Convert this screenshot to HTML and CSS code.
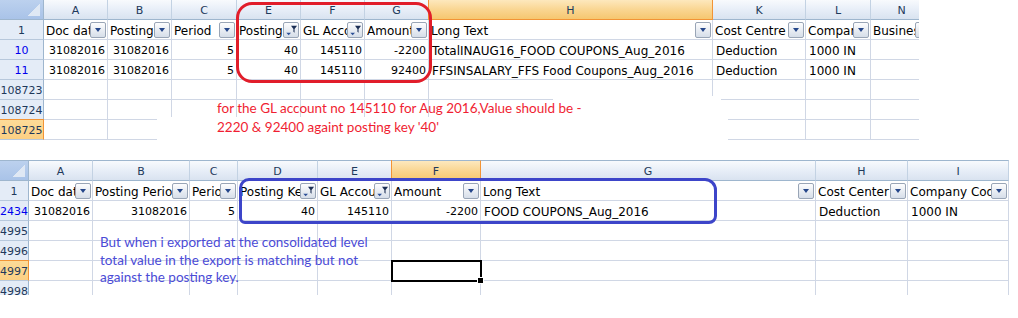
FILE: index.html
```html
<!doctype html>
<html lang="en">
<head>
    <meta charset="UTF-8">
    <title>GL export check</title>
    <link rel="stylesheet" href="styles.css">
</head>
<body>
<div class="sheet sheet--top">
    <div class="grid">
        <div class="corner"></div>
        <div class="ch">A</div>
        <div class="ch">B</div>
        <div class="ch">C</div>
        <div class="ch">E</div>
        <div class="ch">F</div>
        <div class="ch">G</div>
        <div class="ch ch--sel">H</div>
        <div class="ch">K</div>
        <div class="ch">L</div>
        <div class="ch">N</div>

        <div class="rh">1</div>
        <div class="c hd"><span>Doc date</span><i class="dd"></i></div>
        <div class="c hd"><span>Posting Date</span><i class="dd"></i></div>
        <div class="c hd"><span>Period</span><i class="dd"></i></div>
        <div class="c hd"><span>Posting Key</span><i class="dd dd--on"><svg viewBox="0 0 15 15"><path class="fn" d="M7.5 3H14L11.3 6.3V10.5L10.1 9.5V6.3Z"/><path class="ar" d="M2.5 10.5H7.5L5 13Z"/></svg></i></div>
        <div class="c hd"><span>GL Account</span><i class="dd dd--on"><svg viewBox="0 0 15 15"><path class="fn" d="M7.5 3H14L11.3 6.3V10.5L10.1 9.5V6.3Z"/><path class="ar" d="M2.5 10.5H7.5L5 13Z"/></svg></i></div>
        <div class="c hd"><span>Amount</span><i class="dd"></i></div>
        <div class="c hd"><span>Long Text</span><i class="dd"></i></div>
        <div class="c hd"><span>Cost Centre</span><i class="dd"></i></div>
        <div class="c hd"><span>Company Code</span><i class="dd"></i></div>
        <div class="c hd"><span>Business Area</span><i class="dd"></i></div>

        <div class="rh rh--hit">10</div>
        <div class="c n">31082016</div>
        <div class="c n">31082016</div>
        <div class="c n">5</div>
        <div class="c n">40</div>
        <div class="c n">145110</div>
        <div class="c n">-2200</div>
        <div class="c">TotalINAUG16_FOOD COUPONS_Aug_2016</div>
        <div class="c">Deduction</div>
        <div class="c">1000 IN</div>
        <div class="c"></div>

        <div class="rh rh--hit">11</div>
        <div class="c n">31082016</div>
        <div class="c n">31082016</div>
        <div class="c n">5</div>
        <div class="c n">40</div>
        <div class="c n">145110</div>
        <div class="c n">92400</div>
        <div class="c">FFSINSALARY_FFS Food Coupons_Aug_2016</div>
        <div class="c">Deduction</div>
        <div class="c">1000 IN</div>
        <div class="c"></div>

        <div class="rh">108723</div>
        <div class="c"></div><div class="c"></div><div class="c"></div><div class="c"></div><div class="c"></div>
        <div class="c"></div><div class="c"></div><div class="c"></div><div class="c"></div><div class="c"></div>

        <div class="rh">108724</div>
        <div class="c"></div><div class="c"></div><div class="c"></div><div class="c"></div><div class="c"></div>
        <div class="c"></div><div class="c"></div><div class="c"></div><div class="c"></div><div class="c"></div>

        <div class="rh rh--sel">108725</div>
        <div class="c"></div><div class="c"></div><div class="c"></div><div class="c"></div><div class="c"></div>
        <div class="c"></div><div class="c"></div><div class="c"></div><div class="c"></div><div class="c"></div>
    </div>
    <div class="patch patch--low"></div>
    <div class="patch patch--high"></div>
    <div class="ring ring--red"></div>
    <p class="note note--red">for the GL account no 145110 for Aug 2016,Value should be -<br>2220 &amp; 92400 againt posting key '40'</p>
</div>

<div class="sheet sheet--bottom">
    <div class="grid">
        <div class="corner"></div>
        <div class="ch">A</div>
        <div class="ch">B</div>
        <div class="ch">C</div>
        <div class="ch">D</div>
        <div class="ch">E</div>
        <div class="ch ch--sel">F</div>
        <div class="ch">G</div>
        <div class="ch">H</div>
        <div class="ch">I</div>

        <div class="rh">1</div>
        <div class="c hd"><span>Doc date</span><i class="dd"></i></div>
        <div class="c hd"><span>Posting Period</span><i class="dd"></i></div>
        <div class="c hd"><span>Period</span><i class="dd"></i></div>
        <div class="c hd"><span>Posting Key</span><i class="dd dd--on"><svg viewBox="0 0 15 15"><path class="fn" d="M7.5 3H14L11.3 6.3V10.5L10.1 9.5V6.3Z"/><path class="ar" d="M2.5 10.5H7.5L5 13Z"/></svg></i></div>
        <div class="c hd"><span>GL Account</span><i class="dd dd--on"><svg viewBox="0 0 15 15"><path class="fn" d="M7.5 3H14L11.3 6.3V10.5L10.1 9.5V6.3Z"/><path class="ar" d="M2.5 10.5H7.5L5 13Z"/></svg></i></div>
        <div class="c hd"><span>Amount</span><i class="dd"></i></div>
        <div class="c hd"><span>Long Text</span><i class="dd"></i></div>
        <div class="c hd"><span>Cost Center</span><i class="dd"></i></div>
        <div class="c hd"><span>Company Code</span><i class="dd"></i></div>

        <div class="rh rh--hit">2434</div>
        <div class="c n">31082016</div>
        <div class="c n">31082016</div>
        <div class="c n">5</div>
        <div class="c n">40</div>
        <div class="c n">145110</div>
        <div class="c n">-2200</div>
        <div class="c">FOOD COUPONS_Aug_2016</div>
        <div class="c">Deduction</div>
        <div class="c">1000 IN</div>

        <div class="rh">4995</div>
        <div class="c"></div><div class="c"></div><div class="c"></div><div class="c"></div><div class="c"></div>
        <div class="c"></div><div class="c"></div><div class="c"></div><div class="c"></div>

        <div class="rh">4996</div>
        <div class="c"></div><div class="c"></div><div class="c"></div><div class="c"></div><div class="c"></div>
        <div class="c"></div><div class="c"></div><div class="c"></div><div class="c"></div>

        <div class="rh rh--sel">4997</div>
        <div class="c"></div><div class="c"></div><div class="c"></div><div class="c"></div><div class="c"></div>
        <div class="c c--sel"></div><div class="c"></div><div class="c"></div><div class="c"></div>

        <div class="rh">4998</div>
        <div class="c"></div><div class="c"></div><div class="c"></div><div class="c"></div><div class="c"></div>
        <div class="c"></div><div class="c"></div><div class="c"></div><div class="c"></div>
    </div>
    <div class="ring ring--blue"></div>
    <p class="note note--blue">But when i exported at the consolidated level<br>total value in the export is matching but not<br>against the posting key.</p>
</div>
</body>
</html>
```

FILE: styles.css
```css
html,body{margin:0;padding:0;background:#fff}
body{font-family:'DejaVu Sans',Verdana,sans-serif;font-size:11px;color:#000;height:318px;overflow:hidden}

.sheet{position:relative;overflow:hidden}
.sheet--top{width:919px;height:140px}
.sheet--bottom{width:1009px;height:135px;margin-top:20px}

.grid{display:grid;grid-auto-rows:20px}
.sheet--top .grid{grid-template-columns:44px 64px 64px 65px 64px 64px 64px 284px 93px 65px 62px}
.sheet--bottom .grid{grid-template-columns:29px 64px 97px 48px 80px 74px 89px 335px 92px 101px;grid-template-rows:21px}

/* headers */
.corner,.ch,.rh{box-sizing:border-box;color:#1e395b;white-space:nowrap;overflow:hidden}
.corner{background:linear-gradient(to bottom right,transparent 50%,#dfe8f4 50%) right 3px bottom 3px/12px 12px no-repeat,linear-gradient(#bcd1ee,#a9c3e8);border-right:1px solid #9eb6ce;border-bottom:1px solid #9eb6ce}
.ch{background:linear-gradient(#f8fafd,#e6edf7 55%,#d9e3f0);border-right:1px solid #c3d2e3;border-bottom:1px solid #9eb6ce;text-align:center;padding-top:3px;line-height:16px}
.ch--sel{background:linear-gradient(#fde8bd,#f9d48e 55%,#f6c76f);border-right-color:#f29436;border-bottom-color:#f29436;box-shadow:-1px 0 0 #f29436}
.sheet--bottom .ch,.sheet--bottom .corner{border-top:1px solid #9eb6ce}
.rh{background:#e4ecf7;border-right:1px solid #9eb6ce;border-bottom:1px solid #b7c8dc;display:flex;justify-content:center;padding-top:3px;line-height:16px}
.rh--hit{color:#0000ee}
.rh--sel{background:linear-gradient(#fddb98,#fcd083);border-right-color:#f29436;box-shadow:0 -1px 0 #f29436}

/* cells */
.c{box-sizing:border-box;border-right:1px solid #d0d7e5;border-bottom:1px solid #d0d7e5;padding:3px 2px 0 3px;font-size:12px;line-height:16px;white-space:nowrap;overflow:hidden}
.n{text-align:right;font-size:11px}
.c--sel{outline:2px solid #000;outline-offset:-1px;position:relative;overflow:visible;z-index:2}
.c--sel::after{content:'';position:absolute;right:-4px;bottom:-4px;width:5px;height:5px;background:#000;border:1px solid #fff}
.hd{display:flex;align-items:center;padding:0 1px 0 2px}
.hd span{flex:1;min-width:0;overflow:hidden;align-self:stretch;padding-top:3px}

/* filter dropdown */
.dd{flex:none;box-sizing:border-box;width:16px;height:16px;border:1px solid #99a5b6;border-radius:2px;background:linear-gradient(#fdfdfe,#e9edf3 50%,#d6dee9);display:flex;align-items:center;justify-content:center}
.dd::after{content:'';border-left:3.5px solid transparent;border-right:3.5px solid transparent;border-top:4px solid #25468a}
.dd--on::after{display:none}
.dd svg{width:14px;height:14px}
.dd .fn{fill:#1c2f55}
.dd .ar{fill:#2c4f96}

/* pasted annotation */
.patch{position:absolute;background:#fff}
.patch--low{left:157px;top:117px;width:571px;height:23px}
.patch--high{left:553px;top:96px;width:168px;height:21px}
.ring{position:absolute;box-sizing:border-box;border-style:solid;border-width:3px}
.ring--red{left:236px;top:2px;width:196px;height:81px;border-color:#e11d2a;border-radius:16px}
.ring--blue{left:239px;top:18px;width:478px;height:46px;border-color:#3d45c9;border-radius:10px 12px 8px 6px}
.note{position:absolute;margin:0;font-family:Lato,'Liberation Sans',sans-serif;font-size:13.5px;white-space:nowrap}
.note--red{left:217px;top:99px;line-height:19px;color:#f01e32}
.note--blue{left:100px;top:74px;line-height:17.5px;color:#4b4bd6}
```
